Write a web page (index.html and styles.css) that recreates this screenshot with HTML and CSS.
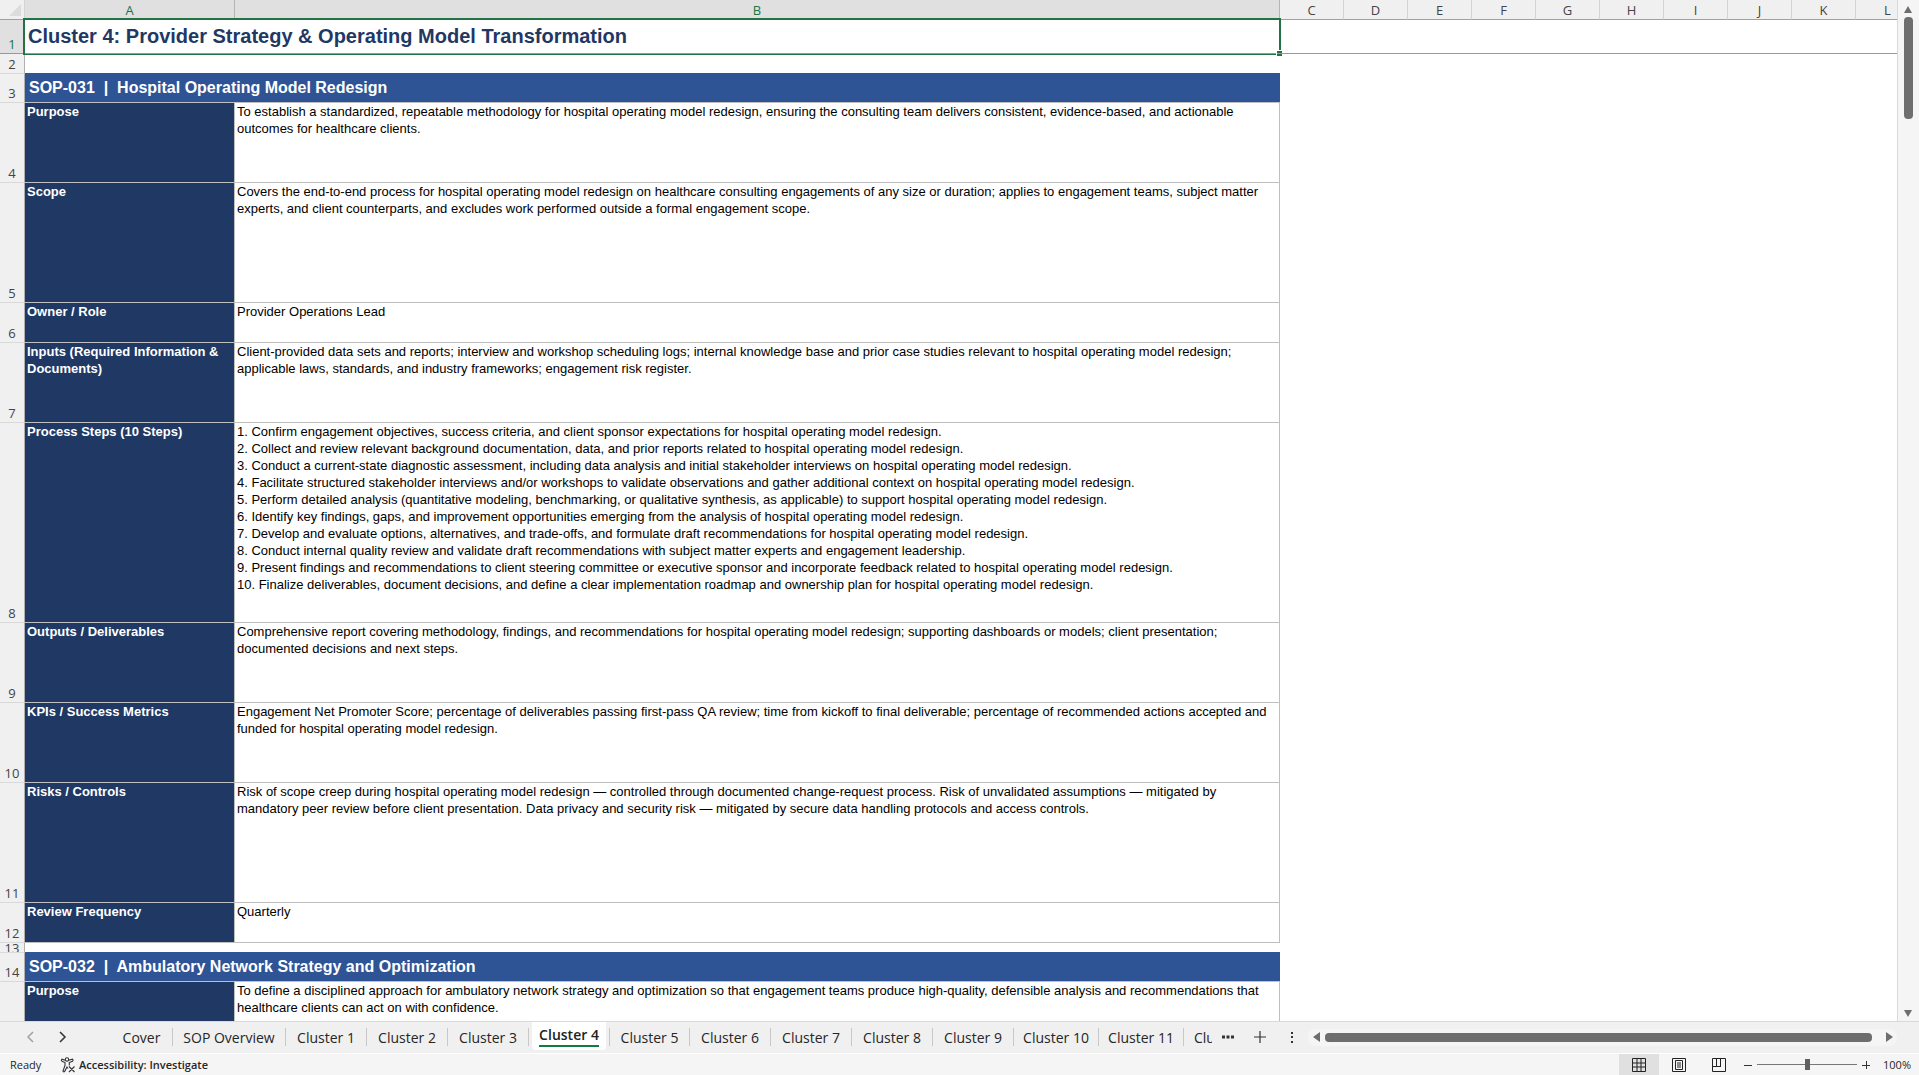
FILE: index.html
```html
<!DOCTYPE html>
<html lang="en">
<head>
<meta charset="utf-8">
<title>Cluster 4: Provider Strategy &amp; Operating Model Transformation</title>
<link rel="stylesheet" href="styles.css">
</head>
<body>
<main class="workspace">
  <div class="sheet">
    <table class="grid">
      <colgroup>
        <col class="col-head"><col class="col-a"><col class="col-b">
        <col class="col-std" span="10">
      </colgroup>
      <thead>
        <tr>
          <th class="corner" aria-label="Select all"><svg width="12" height="12" viewBox="0 0 12 12"><path d="M12 0V12H0Z" fill="#dcdcdc"/></svg></th>
          <th class="active">A</th><th class="active">B</th>
          <th>C</th><th>D</th><th>E</th><th>F</th><th>G</th><th>H</th><th>I</th><th>J</th><th>K</th><th>L</th>
        </tr>
      </thead>
      <tbody>
        <tr class="r-title"><th class="active">1</th><td class="title" colspan="2">Cluster 4: Provider Strategy &amp; Operating Model Transformation<span class="selection"></span><span class="fill-handle"></span></td><td class="blank" colspan="10"></td></tr>
        <tr class="r-gap"><th>2</th><td colspan="12"></td></tr>
        <tr class="r-band"><th>3</th><td class="band" colspan="2">SOP-031 &nbsp;|&nbsp; Hospital Operating Model Redesign</td></tr>
        <tr class="r-4"><th>4</th><td class="label">Purpose</td><td class="text">To establish a standardized, repeatable methodology for hospital operating model redesign, ensuring the consulting team delivers consistent, evidence-based, and actionable<br>outcomes for healthcare clients.</td></tr>
        <tr class="r-6"><th>5</th><td class="label">Scope</td><td class="text">Covers the end-to-end process for hospital operating model redesign on healthcare consulting engagements of any size or duration; applies to engagement teams, subject matter<br>experts, and client counterparts, and excludes work performed outside a formal engagement scope.</td></tr>
        <tr class="r-2"><th>6</th><td class="label">Owner / Role</td><td class="text">Provider Operations Lead</td></tr>
        <tr class="r-4"><th>7</th><td class="label">Inputs (Required Information &amp; Documents)</td><td class="text">Client-provided data sets and reports; interview and workshop scheduling logs; internal knowledge base and prior case studies relevant to hospital operating model redesign;<br>applicable laws, standards, and industry frameworks; engagement risk register.</td></tr>
        <tr class="r-10"><th>8</th><td class="label">Process Steps (10 Steps)</td><td class="text">1. Confirm engagement objectives, success criteria, and client sponsor expectations for hospital operating model redesign.<br>2. Collect and review relevant background documentation, data, and prior reports related to hospital operating model redesign.<br>3. Conduct a current-state diagnostic assessment, including data analysis and initial stakeholder interviews on hospital operating model redesign.<br>4. Facilitate structured stakeholder interviews and/or workshops to validate observations and gather additional context on hospital operating model redesign.<br>5. Perform detailed analysis (quantitative modeling, benchmarking, or qualitative synthesis, as applicable) to support hospital operating model redesign.<br>6. Identify key findings, gaps, and improvement opportunities emerging from the analysis of hospital operating model redesign.<br>7. Develop and evaluate options, alternatives, and trade-offs, and formulate draft recommendations for hospital operating model redesign.<br>8. Conduct internal quality review and validate draft recommendations with subject matter experts and engagement leadership.<br>9. Present findings and recommendations to client steering committee or executive sponsor and incorporate feedback related to hospital operating model redesign.<br>10. Finalize deliverables, document decisions, and define a clear implementation roadmap and ownership plan for hospital operating model redesign.</td></tr>
        <tr class="r-4"><th>9</th><td class="label">Outputs / Deliverables</td><td class="text">Comprehensive report covering methodology, findings, and recommendations for hospital operating model redesign; supporting dashboards or models; client presentation;<br>documented decisions and next steps.</td></tr>
        <tr class="r-4"><th>10</th><td class="label">KPIs / Success Metrics</td><td class="text">Engagement Net Promoter Score; percentage of deliverables passing first-pass QA review; time from kickoff to final deliverable; percentage of recommended actions accepted and<br>funded for hospital operating model redesign.</td></tr>
        <tr class="r-6"><th>11</th><td class="label">Risks / Controls</td><td class="text">Risk of scope creep during hospital operating model redesign — controlled through documented change-request process. Risk of unvalidated assumptions — mitigated by<br>mandatory peer review before client presentation. Data privacy and security risk — mitigated by secure data handling protocols and access controls.</td></tr>
        <tr class="r-2"><th>12</th><td class="label">Review Frequency</td><td class="text">Quarterly</td></tr>
        <tr class="r-thin"><th><div class="thin-number">13</div></th><td colspan="12"></td></tr>
        <tr class="r-band"><th>14</th><td class="band" colspan="2">SOP-032 &nbsp;|&nbsp; Ambulatory Network Strategy and Optimization</td></tr>
        <tr class="r-4"><th></th><td class="label">Purpose</td><td class="text">To define a disciplined approach for ambulatory network strategy and optimization so that engagement teams produce high-quality, defensible analysis and recommendations that<br>healthcare clients can act on with confidence.</td></tr>
      </tbody>
    </table>
  </div>
  <div class="vscroll">
    <button class="arrow" aria-label="Scroll up"><svg width="10" height="9" viewBox="0 0 10 9"><path d="M5 1L9 8H1Z"/></svg></button>
    <div class="vtrack"><div class="vthumb"></div></div>
    <button class="arrow" aria-label="Scroll down"><svg width="10" height="9" viewBox="0 0 10 9"><path d="M5 8L9 1H1Z"/></svg></button>
  </div>
</main>
<nav class="tabbar" aria-label="Sheets">
  <div class="tab-nav">
    <button aria-label="Previous sheet" class="dim"><svg width="8" height="12" viewBox="0 0 8 12"><path d="M6 1L1 6L6 11"/></svg></button>
    <button aria-label="Next sheet"><svg width="8" height="12" viewBox="0 0 8 12"><path d="M1 1L6 6L1 11"/></svg></button>
  </div>
  <div class="tabs">
    <button class="tab w-cover">Cover</button>
    <button class="tab w-overview">SOP Overview</button>
    <button class="tab">Cluster 1</button>
    <button class="tab">Cluster 2</button>
    <button class="tab">Cluster 3</button>
    <button class="tab current"><span>Cluster 4</span></button>
    <button class="tab after-current">Cluster 5</button>
    <button class="tab">Cluster 6</button>
    <button class="tab">Cluster 7</button>
    <button class="tab">Cluster 8</button>
    <button class="tab">Cluster 9</button>
    <button class="tab w-long">Cluster 10</button>
    <button class="tab w-long">Cluster 11</button>
    <button class="tab w-cut">Cluster 12</button>
  </div>
  <button class="tool" aria-label="More sheets"><svg width="12" height="4" viewBox="0 0 12 4"><path d="M0 0.500H3V3.500H0ZM4.500 0.500H7.500V3.500H4.500ZM9 0.500H12V3.500H9Z" fill="#333"/></svg></button>
  <button class="tool plus" aria-label="New sheet"><svg width="12" height="12" viewBox="0 0 12 12"><path d="M6 0V12M0 6H12" stroke="#333" stroke-width="1.200"/></svg></button>
  <span class="grip"><svg width="2" height="11" viewBox="0 0 2 11"><path d="M0 0H2V2H0ZM0 4H2V6H0ZM0 9H2V11H0Z" fill="#333"/></svg></span>
  <div class="hscroll">
    <button class="arrow" aria-label="Scroll left"><svg width="8" height="10" viewBox="0 0 8 10"><path d="M0 5L7 0V10Z"/></svg></button>
    <div class="hthumb"></div>
    <button class="arrow" aria-label="Scroll right"><svg width="8" height="10" viewBox="0 0 8 10"><path d="M8 5L1 0V10Z"/></svg></button>
  </div>
</nav>
<footer class="status">
  <span class="ready">Ready</span>
  <button class="access"><svg width="16" height="16" viewBox="0 0 16 16" fill="none" stroke="#333" stroke-width="1.100"><circle cx="7" cy="2.500" r="1.700"/><path d="M5.300 3.200L2 2.200Q0.800 3.200 2 4.200L5 5.600V8.500L3 14Q3.500 15.300 4.600 14.600L7 10L8 11.500M8.700 3.200L12.500 2.200Q13.600 3.200 12.500 4.200L9.300 5.600V8.500M9 9.500L14.500 15M14.500 9.500L9 15"/></svg>Accessibility: Investigate</button>
  <div class="views">
    <button class="view on" aria-label="Normal"><svg width="14" height="14" viewBox="0 0 14 14"><path d="M.5.5H13.500V13.500H.5ZM5 0V14M9 0V14M0 5H14M0 9H14"/></svg></button>
    <button class="view" aria-label="Page Layout"><svg width="14" height="14" viewBox="0 0 14 14"><path d="M.5.5H13.500V13.500H.5ZM3.500 2.500H10.500V11.500H3.500ZM5 5H9M5 7H9M5 9H9"/></svg></button>
    <button class="view" aria-label="Page Break Preview"><svg width="14" height="14" viewBox="0 0 14 14"><path d="M.5.5H13.500V13.500H.5ZM4.500 0V8.500M8.500 0V8.500M0 8.500H9"/></svg></button>
  </div>
  <div class="zoom">
    <button class="step" aria-label="Zoom out"><svg width="8" height="8" viewBox="0 0 8 8"><path d="M0 4.500H8"/></svg></button>
    <input class="slider" type="range" min="0" max="100" value="50" aria-label="Zoom">
    <button class="step" aria-label="Zoom in"><svg width="8" height="8" viewBox="0 0 8 8"><path d="M0 4.500H8M4.500 0V8"/></svg></button>
    <span class="percent">100%</span>
  </div>
</footer>
</body>
</html>
```
FILE: styles.css
```css
* { box-sizing: border-box; }

body {
  margin: 0;
  height: 100vh;
  display: flex;
  flex-direction: column;
  overflow: hidden;
  background: #f0f0f0;
  color: #262626;
  font-family: "Open Sans", "Noto Sans", sans-serif;
}

button {
  display: flex;
  align-items: center;
  justify-content: center;
  padding: 0;
  border: 0;
  background: none;
  color: inherit;
  font: inherit;
}

svg { display: block; }

.workspace {
  flex: 1;
  min-height: 0;
  display: flex;
}

.sheet {
  flex: 1;
  min-width: 0;
  overflow: hidden;
  background: #fff;
}

/* Grid */
.grid {
  width: 1920px;
  table-layout: fixed;
  border-collapse: separate;
  border-spacing: 0;
}

.col-head { width: 25px; }
.col-a { width: 210px; }
.col-b { width: 1045px; }
.col-std { width: 64px; }

.grid th, .grid td { padding: 0; }

.grid th {
  background: #f0f0f0;
  border-right: 1px solid #d4d4d4;
  color: #444;
  font-size: 13px;
  line-height: 16px;
  font-weight: 400;
}

.grid thead th {
  height: 20px;
  border-bottom: 1px solid #a0a0a0;
}

.grid thead th.active {
  background: #e0e0e0;
  border-right-color: #b4b4b4;
  color: #217346;
}

.grid tbody th {
  padding-bottom: 1px;
  vertical-align: bottom;
  border-right-color: #b0b0b0;
  border-bottom: 1px solid #d9d9d9;
}

.grid tbody th.active {
  background: #e0e0e0;
  color: #217346;
}

.corner svg { margin: 0 3px 0 auto; }

.r-title { height: 34px; }
.r-gap { height: 20px; }
.r-band { height: 29px; }
.r-2 { height: 40px; }
.r-4 { height: 80px; }
.r-6 { height: 120px; }
.r-10 { height: 200px; }
.r-thin { height: 10px; }

.grid .r-thin th { padding: 0; }

.grid .r-title > * { border-bottom: 1px solid #999; }

.grid .title {
  position: relative;
  padding: 0 0 2px 3px;
  color: #1f3864;
  font: 700 20px/24px "Liberation Sans", Arial, sans-serif;
}

.selection {
  position: absolute;
  inset: -2px -1px -2px -2px;
  border: 2px solid #217346;
  border-bottom-width: 1px;
}

.fill-handle {
  position: absolute;
  right: -2px;
  bottom: -3px;
  width: 6px;
  height: 6px;
  border: solid #fff;
  border-width: 1px 0 0 1px;
  background: linear-gradient(#217346 2px, #999 2px, #999 3px, #217346 3px);
}

.grid .band {
  padding-left: 4px;
  background: #2f5496;
  box-shadow: 0 -1px 0 #2f5496;
  border-bottom: 1px solid #bfbfbf;
  color: #fff;
  font: 700 16px/20px "Liberation Sans", Arial, sans-serif;
}

.grid .label, .grid .text {
  vertical-align: top;
  border-right: 1px solid #bfbfbf;
  border-bottom: 1px solid #bfbfbf;
  font: 13px/17px "Liberation Sans", Arial, sans-serif;
}

.grid .label {
  padding-left: 2px;
  background: #1f3864;
  color: #fff;
  font-weight: 700;
}

.grid .text {
  padding-left: 2px;
  color: #000;
  white-space: nowrap;
}

.thin-number {
  height: 9px;
  display: flex;
  justify-content: center;
  align-items: center;
  overflow: hidden;
}

/* Scrollbars */
.arrow path { fill: #6e6e6e; }

.vscroll {
  width: 22px;
  padding: 4px 3px 2px 2px;
  display: flex;
  flex-direction: column;
  align-items: stretch;
  border-left: 1px solid #d9d9d9;
  background: #f5f5f5;
}

.vscroll .arrow { height: 11px; }

.vtrack { flex: 1; padding-top: 2px; }

.vthumb {
  width: 9px;
  height: 102px;
  margin: 0 auto;
  border-radius: 4px;
  background: #6e6e6e;
}

.hscroll {
  flex: 1;
  height: 17px;
  margin-right: 22px;
  display: flex;
  align-items: center;
  border-radius: 8px;
  background: #f5f5f5;
}

.hscroll .arrow { width: 17px; }

.hthumb {
  flex: 1;
  height: 9px;
  margin-right: 8px;
  border-radius: 4px;
  background: #6e6e6e;
}

/* Sheet tabs */
.tabbar {
  height: 32px;
  padding-bottom: 1px;
  display: flex;
  align-items: center;
  border-top: 1px solid #d9d9d9;
  font-size: 14px;
}

.tab-nav {
  width: 111px;
  padding-left: 15px;
  display: flex;
}

.tab-nav button { width: 32px; height: 24px; }
.tab-nav path { fill: none; stroke: #333; stroke-width: 1.5; }
.tab-nav .dim path { stroke: #a0a0a0; }

.tabs { display: flex; align-self: stretch; align-items: center; }

.tab {
  width: 81px;
  height: 18px;
  border-right: 1px solid #c8c8c8;
  white-space: nowrap;
}

.w-cover { width: 62px; }
.w-overview { width: 113px; }
.w-long { width: 85px; }
.w-cut { width: 28px; border: 0; overflow: hidden; justify-content: flex-start; padding-left: 10px; }

.current {
  align-self: stretch;
  width: 74px;
  height: 28px;
  margin: 0 3px;
  padding-top: 3px;
  align-items: flex-start;
  border: 0;
  border-radius: 0 0 4px 4px;
  background: #fff;
  color: #222;
  font-weight: 600;
}

.current span { border-bottom: 2px solid #107c41; line-height: 20px; }

.after-current { border-left: 1px solid #c8c8c8; }

.tool { width: 32px; height: 24px; }
.grip { width: 32px; display: flex; justify-content: center; }

/* Status bar */
.status {
  height: 22px;
  display: flex;
  align-items: center;
  border-top: 1px solid #fff;
  background: #f5f5f5;
  font-size: 11px;
}

.ready { width: 60px; padding-left: 10px; }
.access { gap: 3px; font-weight: 600; }

.views { margin-left: auto; display: flex; align-self: stretch; }
.view { width: 40px; }
.view.on { background: #e0e0e0; }
.view path { fill: none; stroke: #222; }

.zoom { display: flex; align-items: center; }
.step { width: 18px; height: 20px; }
.step path { stroke: #333; }

.slider {
  appearance: none;
  width: 100px;
  height: 20px;
  margin: 0;
  background: linear-gradient(#777, #777) center / 100% 1px no-repeat;
}

.slider::-webkit-slider-thumb {
  appearance: none;
  width: 5px;
  height: 11px;
  background: #606060;
}

.percent { width: 44px; text-align: center; }
```
